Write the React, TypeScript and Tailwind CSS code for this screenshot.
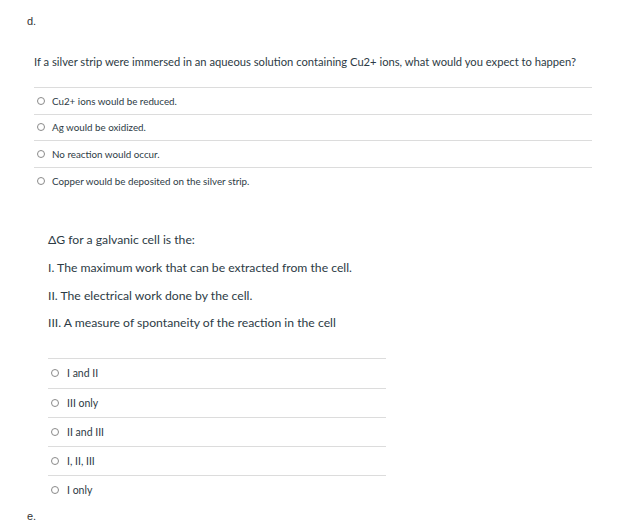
import React from 'react';

const firstOptions = [
  'Cu2+ ions would be reduced.',
  'Ag would be oxidized.',
  'No reaction would occur.',
  'Copper would be deposited on the silver strip.',
];

const statements = [
  'ΔG for a galvanic cell is the:',
  'I. The maximum work that can be extracted from the cell.',
  'II. The electrical work done by the cell.',
  'III. A measure of spontaneity of the reaction in the cell',
];

const secondOptions = ['I and II', 'III only', 'II and III', 'I, II, III', 'I only'];

function Radio() {
  return <span className="block w-[8px] h-[8px] rounded-full border border-[#8a8a8a] bg-white shrink-0" />;
}

export default function App() {
  return (
    <div className="w-[642px] h-[527px] bg-white overflow-hidden text-[#2d3b45]" style={{ fontFamily: 'Lato, "Noto Sans", sans-serif' }}>
      <div className="pl-[27px] pt-[14px] text-[11px] leading-[14px] text-[#333]" style={{ fontFamily: '"Liberation Sans", Arial, sans-serif' }}>d.</div>

      <div className="ml-[34px] w-[558px]">
        <p className="mt-[27px] text-[11.2px] leading-[14px]">
          If a silver strip were immersed in an aqueous solution containing Cu2+ ions, what would you expect to happen?
        </p>
        <ul className="mt-[18px]">
          {firstOptions.map(opt => (
            <li key={opt} className="h-[26.67px] flex items-center pl-[3px] gap-[7px] border-t border-[#dcdcdc]">
              <Radio />
              <span className="text-[9.8px] leading-[12px]">{opt}</span>
            </li>
          ))}
        </ul>
      </div>

      <div className="ml-[48px] w-[338px] mt-[33px]">
        {statements.map(s => (
          <p key={s} className="h-[27.67px] flex items-center text-[12.2px] leading-[14px]">{s}</p>
        ))}
        <ul className="mt-[21px]">
          {secondOptions.map(opt => (
            <li key={opt} className="h-[29.25px] flex items-center pl-[3px] gap-[8px] border-t border-[#dcdcdc]">
              <Radio />
              <span className="text-[10.5px] leading-[12px]">{opt}</span>
            </li>
          ))}
        </ul>
      </div>

      <div className="pl-[27px] mt-[4px] text-[11px] leading-[14px] text-[#333]" style={{ fontFamily: '"Liberation Sans", Arial, sans-serif' }}>e.</div>
    </div>
  );
}
